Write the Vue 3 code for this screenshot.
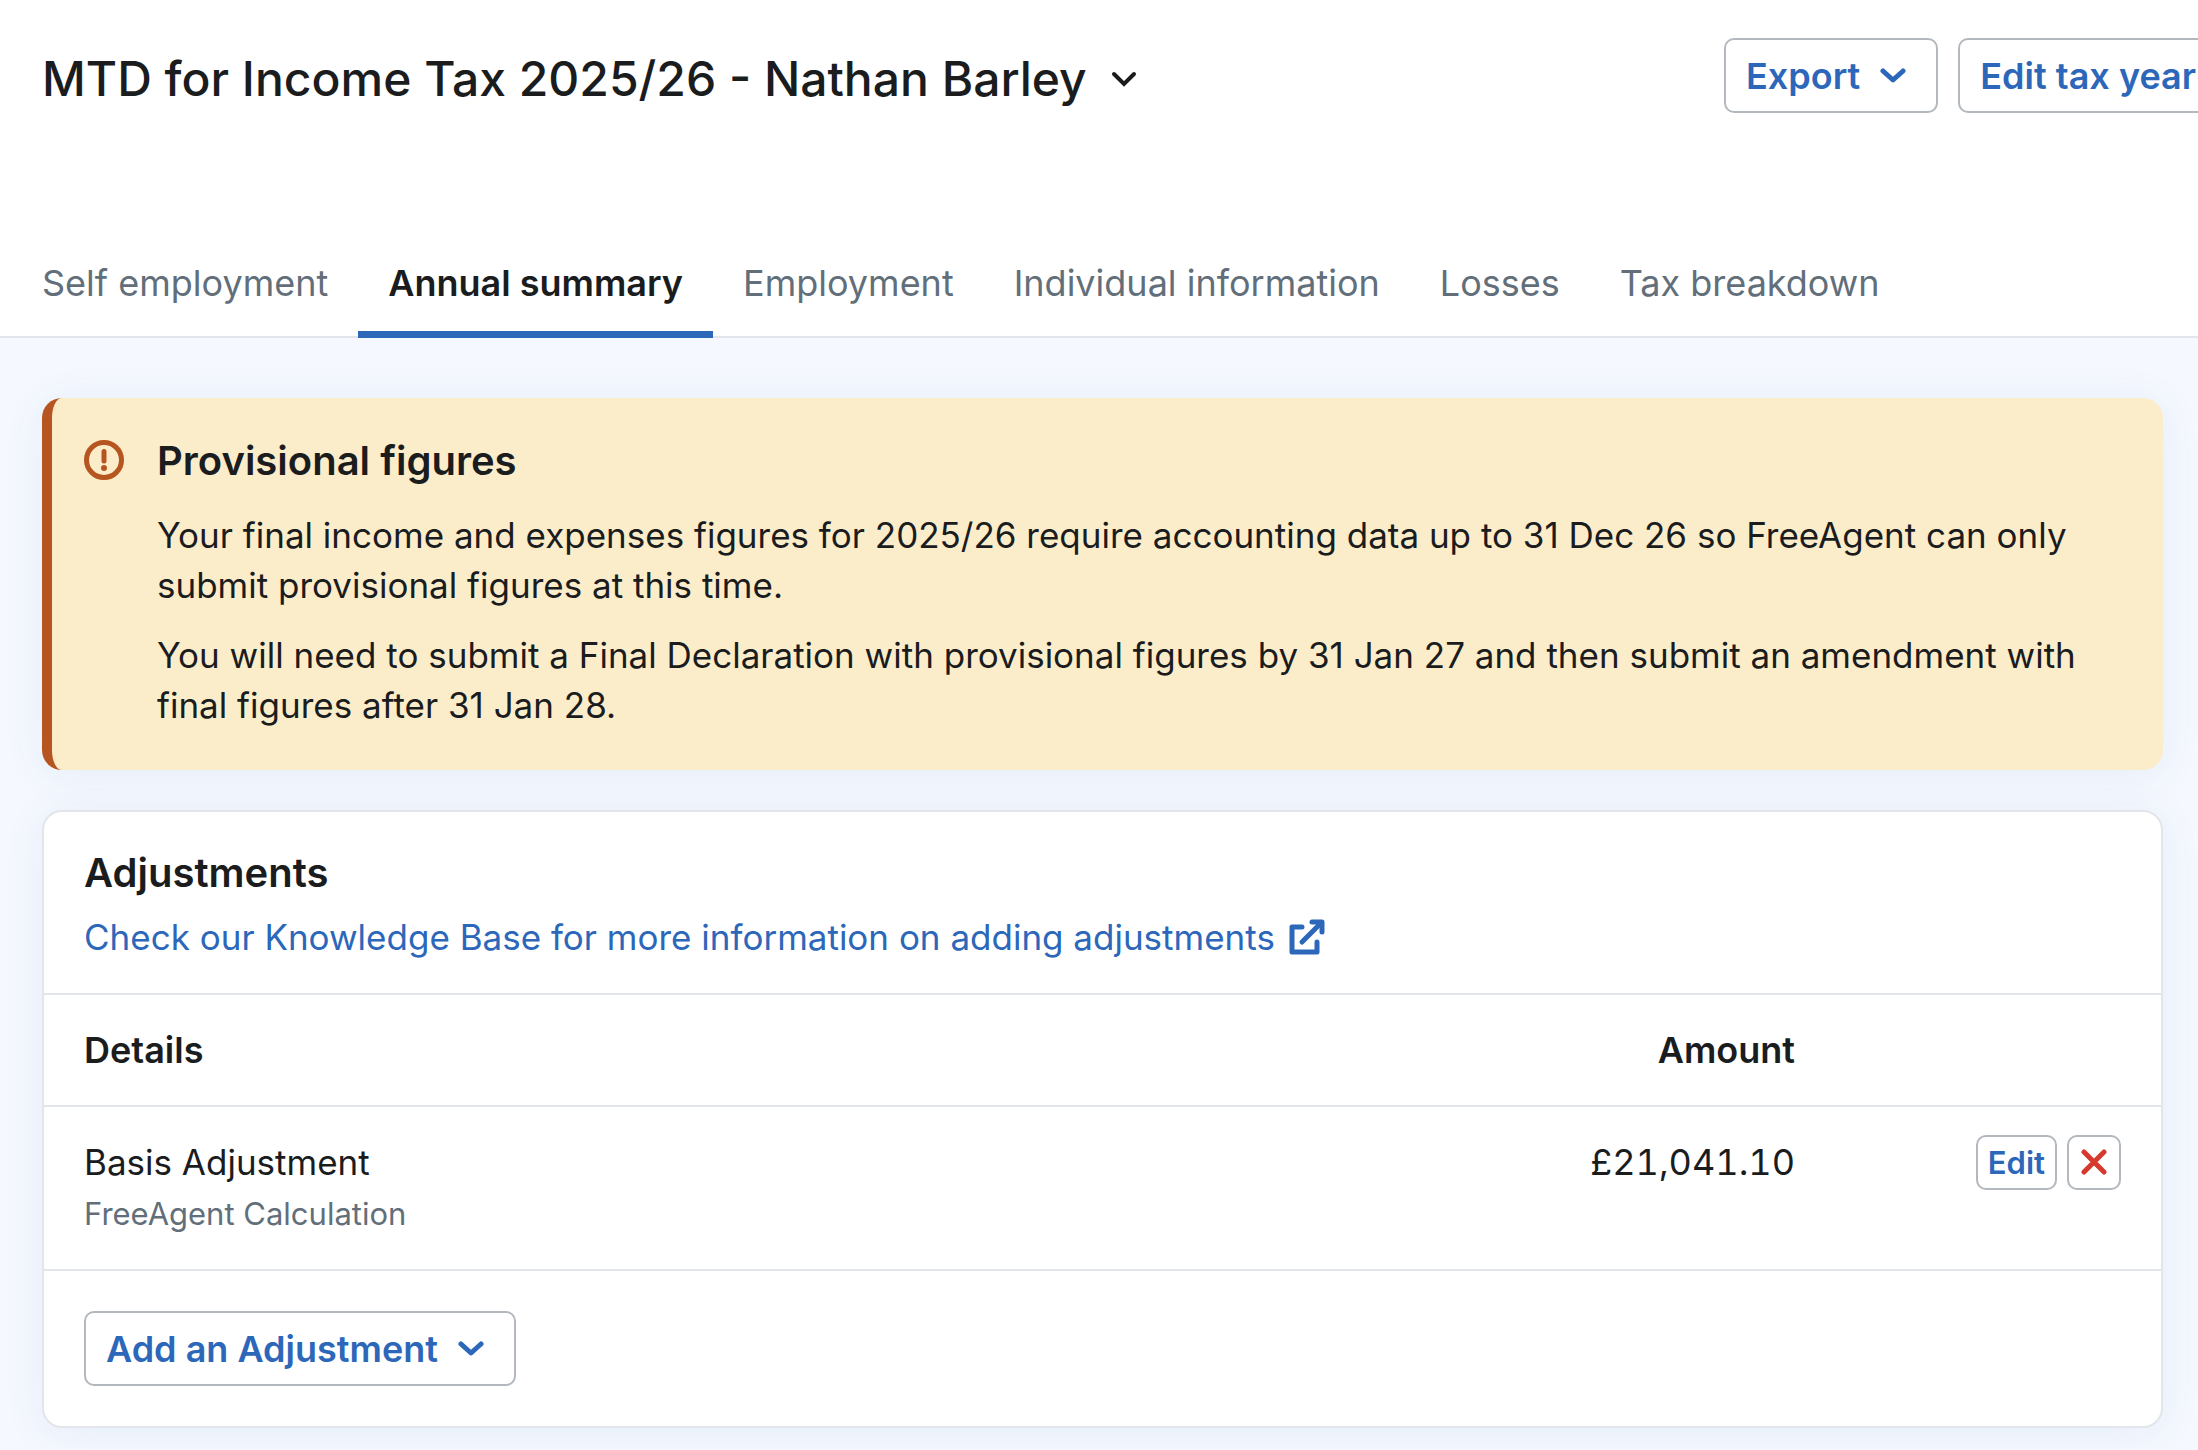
<template>
  <div class="page">
    <header class="page-header">
      <h1 class="page-title">
        <button type="button" class="title-button">
          {{ title }}
          <svg class="title-chevron" viewBox="0 0 26 16" fill="none" aria-hidden="true">
            <path d="M3 3l10 10L23 3" stroke="currentColor" stroke-width="4" stroke-linecap="round" />
          </svg>
        </button>
      </h1>
      <div class="header-actions">
        <button type="button" class="btn">
          Export
          <svg class="chevron" viewBox="0 0 26 16" fill="none" aria-hidden="true">
            <path d="M3 3l10 9L23 3" stroke="currentColor" stroke-width="5" stroke-linecap="round" stroke-linejoin="round" />
          </svg>
        </button>
        <button type="button" class="btn">Edit tax year</button>
      </div>
    </header>

    <nav class="tabs">
      <a
        v-for="tab in tabs"
        :key="tab"
        href="#"
        :class="['tab', { active: tab === activeTab }]"
        @click.prevent="activeTab = tab"
      >{{ tab }}</a>
    </nav>

    <main class="content">
      <section class="alert">
        <svg class="alert-icon" viewBox="0 0 40 40" fill="none" aria-hidden="true">
          <circle cx="20" cy="20" r="17.5" stroke="currentColor" stroke-width="5" />
          <path d="M20 11.5v9.5" stroke="currentColor" stroke-width="5" stroke-linecap="round" />
          <circle cx="20" cy="28" r="3" fill="currentColor" />
        </svg>
        <div class="alert-body">
          <h2 class="section-title">Provisional figures</h2>
          <p>Your final income and expenses figures for 2025/26 require accounting data up to 31 Dec 26 so FreeAgent can only submit provisional figures at this time.</p>
          <p>You will need to submit a Final Declaration with provisional figures by 31 Jan 27 and then submit an amendment with final figures after 31 Jan 28.</p>
        </div>
      </section>

      <section class="card">
        <div class="card-header">
          <h2 class="section-title">Adjustments</h2>
          <a href="#" class="kb-link">
            Check our Knowledge Base for more information on adding adjustments
            <svg class="external-icon" viewBox="0 0 36 36" fill="none" aria-hidden="true">
              <path d="M13 8H3v25h25V23" stroke="currentColor" stroke-width="5" stroke-linecap="round" stroke-linejoin="round" />
              <path d="M13 23L32 4" stroke="currentColor" stroke-width="5" stroke-linecap="round" />
              <path d="M23 3h10v10" stroke="currentColor" stroke-width="5" stroke-linecap="round" stroke-linejoin="round" />
            </svg>
          </a>
        </div>

        <table class="adjustments">
          <thead>
            <tr>
              <th>Details</th>
              <th class="amount">Amount</th>
              <th class="row-actions"></th>
            </tr>
          </thead>
          <tbody>
            <tr v-for="row in adjustments" :key="row.name">
              <td>
                {{ row.name }}
                <div class="source">{{ row.source }}</div>
              </td>
              <td class="amount">{{ row.amount }}</td>
              <td class="row-actions">
                <div class="row-buttons">
                  <button type="button" class="btn-small">Edit</button>
                  <button type="button" class="btn-small delete" aria-label="Delete">
                    <svg viewBox="0 0 26 26" fill="none" aria-hidden="true">
                      <path d="M3 3l20 20M23 3L3 23" stroke="currentColor" stroke-width="5" stroke-linecap="round" />
                    </svg>
                  </button>
                </div>
              </td>
            </tr>
          </tbody>
        </table>

        <div class="card-footer">
          <button type="button" class="btn">
            Add an Adjustment
            <svg class="chevron" viewBox="0 0 26 16" fill="none" aria-hidden="true">
              <path d="M3 3l10 9L23 3" stroke="currentColor" stroke-width="5" stroke-linecap="round" stroke-linejoin="round" />
            </svg>
          </button>
        </div>
      </section>
    </main>
  </div>
</template>

<script setup>
import { ref } from 'vue'

const title = 'MTD for Income Tax 2025/26 - Nathan Barley'

const tabs = [
  'Self employment',
  'Annual summary',
  'Employment',
  'Individual information',
  'Losses',
  'Tax breakdown',
]
const activeTab = ref('Annual summary')

const adjustments = [
  { name: 'Basis Adjustment', source: 'FreeAgent Calculation', amount: '£21,041.10' },
]
</script>

<style>
body {
  background: #f5f8fe;
}
</style>

<style scoped>
.page {
  overflow: hidden;
  font-family: Inter, 'Liberation Sans', sans-serif;
  font-size: 35px;
  line-height: 50px;
  color: #1a1c1e;
}

h1,
h2,
p {
  margin: 0;
}

button {
  font-family: inherit;
  cursor: pointer;
}

.page-header {
  display: flex;
  justify-content: space-between;
  align-items: flex-start;
  height: 202px;
  padding: 38px 0 0 42px;
  box-sizing: border-box;
  background: #fff;
  white-space: nowrap;
}

.title-button {
  display: flex;
  align-items: center;
  gap: 24px;
  padding: 0;
  border: 0;
  background: none;
  font-size: 48px;
  font-weight: 500;
  line-height: 82px;
  color: inherit;
}

.title-chevron {
  width: 26px;
  height: 16px;
}

/* the action row runs past the right edge of the window */
.header-actions {
  display: flex;
  gap: 20px;
  margin-right: -20px;
}

.btn {
  display: flex;
  align-items: center;
  height: 75px;
  padding: 0 20px;
  border: 2px solid #b3b8bf;
  border-radius: 10px;
  background: #fff;
  font-size: 36px;
  font-weight: 600;
  color: #2c67ba;
}

.chevron {
  width: 26px;
  height: 16px;
  margin: 0 10px 0 20px;
}

.tabs {
  display: flex;
  padding: 0 12px;
  border-bottom: 2px solid #e2e5ea;
  background: #fff;
}

.tab {
  height: 134px;
  padding: 0 30px;
  box-sizing: border-box;
  font-size: 36px;
  line-height: 162px;
  color: #626f7a;
  text-decoration: none;
  white-space: nowrap;
}

.tab.active {
  height: 136px;
  margin-bottom: -2px;
  border-bottom: 7px solid #2c67ba;
  font-weight: 600;
  color: #1a1c1e;
}

.content {
  display: flex;
  flex-direction: column;
  gap: 40px;
  padding: 60px 35px 21px 42px;
}

.alert {
  display: flex;
  gap: 33px;
  padding: 38px 42px 40px 32px;
  border-left: 10px solid #b65520;
  border-radius: 20px;
  background: #fcedca;
  box-shadow: 0 4px 40px rgba(44, 103, 186, 0.08);
}

.alert-icon {
  flex: none;
  width: 40px;
  height: 40px;
  margin-top: 4px;
  color: #b65520;
}

.section-title {
  font-size: 40px;
  font-weight: 600;
  line-height: 50px;
}

.alert-body p {
  margin-top: 20px;
}

.alert-body .section-title {
  margin-bottom: 24px;
}

.alert-body .section-title + p {
  margin-top: 0;
}

.card {
  border: 2px solid #e2e5ea;
  border-radius: 20px;
  background: #fff;
  box-shadow: 0 4px 40px rgba(44, 103, 186, 0.08);
}

.card-header {
  padding: 36px 40px 31px;
}

.kb-link {
  display: flex;
  align-items: center;
  gap: 14px;
  margin-top: 14px;
  color: #2c67ba;
  text-decoration: none;
}

.external-icon {
  width: 36px;
  height: 36px;
}

.adjustments {
  width: 100%;
  border-collapse: collapse;
}

.adjustments tr {
  border-top: 2px solid #e2e5ea;
}

.adjustments th,
.adjustments td {
  padding: 30px 40px;
  text-align: left;
  vertical-align: top;
}

.adjustments th {
  font-size: 36px;
  font-weight: 600;
}

.adjustments .amount {
  padding-right: 0;
  text-align: right;
}

.adjustments td.amount {
  font-size: 36px;
  font-variant-numeric: tabular-nums;
}

.adjustments .row-actions {
  width: 286px;
}

.source {
  margin-top: 2px;
  font-size: 31px;
  color: #626f7a;
}

.row-buttons {
  display: flex;
  align-items: center;
  justify-content: flex-end;
  gap: 10px;
  height: 50px;
}

.btn-small {
  display: flex;
  align-items: center;
  justify-content: center;
  height: 55px;
  padding: 0 10px;
  border: 2px solid #b3b8bf;
  border-radius: 10px;
  background: #fff;
  font-size: 31px;
  font-weight: 600;
  color: #2c67ba;
}

.btn-small.delete {
  width: 54px;
  padding: 0;
  color: #d63a2f;
}

.btn-small svg {
  width: 26px;
  height: 26px;
}

.card-footer {
  padding: 40px;
  border-top: 2px solid #e2e5ea;
}
</style>
